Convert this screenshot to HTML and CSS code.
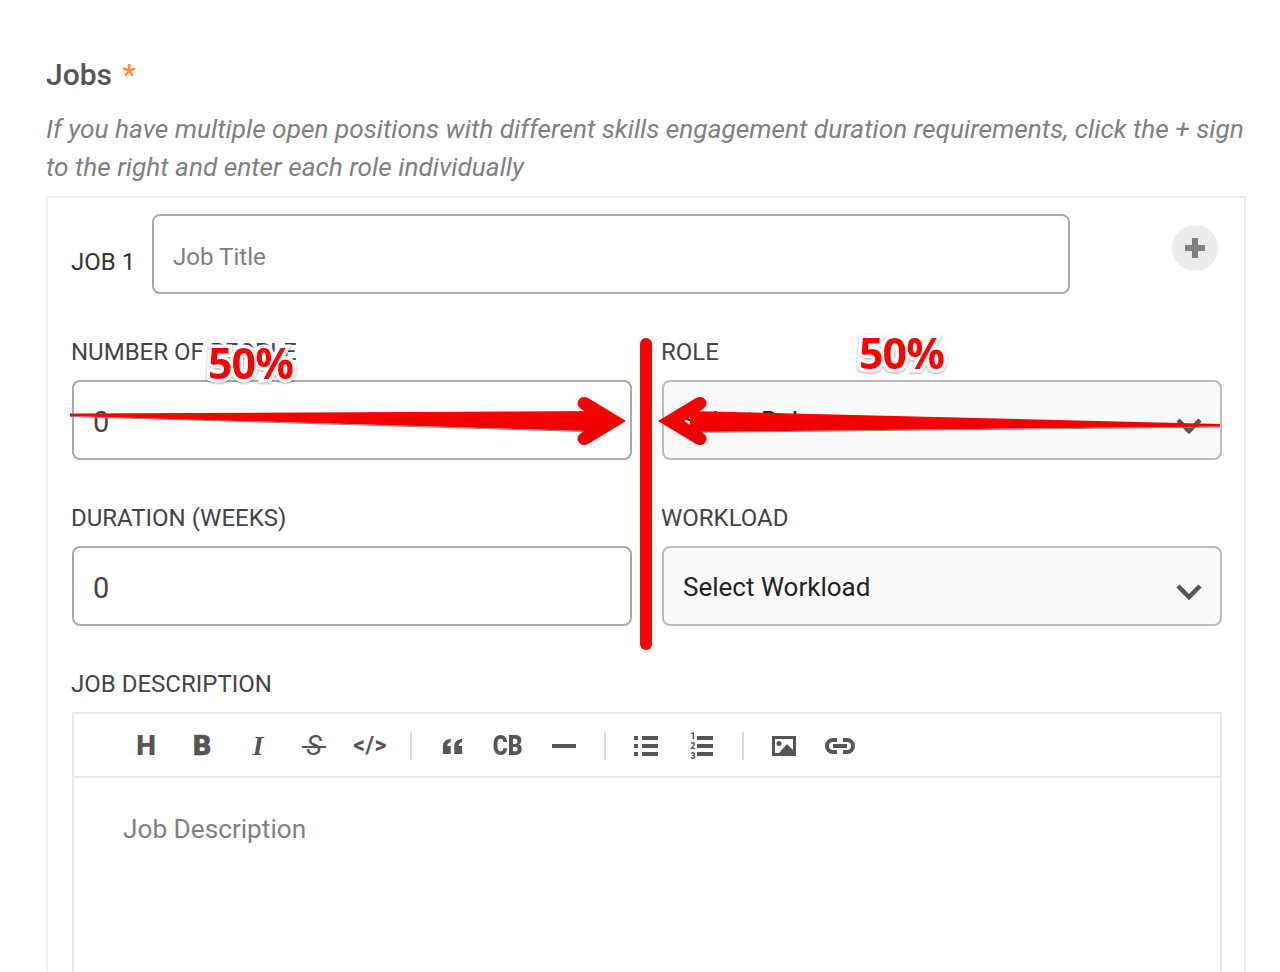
FILE: index.html
```html
<!DOCTYPE html>
<html lang="en">
<head>
  <meta charset="UTF-8" />
  <title>Jobs</title>
  <link rel="stylesheet" href="styles.css">
</head>
<body>
  <div class="page">
    <div class="section-title">Jobs <span class="required">*</span></div>
    <div class="section-hint">If you have multiple open positions with different skills engagement duration requirements, click the + sign to the right and enter each role individually</div>

    <div class="job-panel">
      <div class="job-head">
        <div class="job-name">JOB 1</div>
        <div class="field-box title-box"><span class="placeholder">Job Title</span></div>
        <button class="add-btn" aria-label="Add job">
          <svg width="22" height="22" viewBox="0 0 22 22"><path d="M8 1h6v7h7v6h-7v7H8v-7H1V8h7z" fill="#808080"/></svg>
        </button>
      </div>

      <div class="job-grid">
        <div class="field">
          <div class="field-label">NUMBER OF PEOPLE</div>
          <div class="field-box"><span class="value">0</span></div>
        </div>
        <div class="field">
          <div class="field-label">ROLE</div>
          <div class="field-box select-box">
            <span class="value-select">Select Role</span>
            <svg class="chevron" width="28" height="18" viewBox="0 0 28 18"><path d="M3 3l11 11L25 3" fill="none" stroke="#555" stroke-width="4.500"/></svg>
          </div>
        </div>
        <div class="field">
          <div class="field-label">DURATION (WEEKS)</div>
          <div class="field-box"><span class="value">0</span></div>
        </div>
        <div class="field">
          <div class="field-label">WORKLOAD</div>
          <div class="field-box select-box">
            <span class="value-select">Select Workload</span>
            <svg class="chevron" width="28" height="18" viewBox="0 0 28 18"><path d="M3 3l11 11L25 3" fill="none" stroke="#555" stroke-width="4.500"/></svg>
          </div>
        </div>
      </div>

      <div class="field-label">JOB DESCRIPTION</div>
      <div class="editor">
        <div class="toolbar">
          <span class="tool tool-h">H</span>
          <span class="tool tool-b">B</span>
          <span class="tool tool-i">I</span>
          <span class="tool tool-s">S</span>
          <span class="tool tool-code">&lt;/&gt;</span>
          <i class="sep"></i>
          <span class="tool">
            <svg width="21" height="16" viewBox="0 0 24 20" preserveAspectRatio="none"><path d="M1 20V11C1 5 4 2 10 1v4C7 6 6 8 6 10h4v10zM14 20V11c0-6 3-9 9-10v4c-3 1-4 3-4 5h4v10z" fill="#555"/></svg>
          </span>
          <span class="tool tool-cb"><span class="cb-text">CB</span></span>
          <span class="tool">
            <svg width="24" height="4" viewBox="0 0 24 4"><rect width="24" height="4" fill="#555"/></svg>
          </span>
          <i class="sep"></i>
          <span class="tool">
            <svg width="24" height="20" viewBox="0 0 24 20"><path d="M0 0h4v4H0zM8 0h16v4H8zM0 8h4v4H0zM8 8h16v4H8zM0 16h4v4H0zM8 16h16v4H8z" fill="#555"/></svg>
          </span>
          <span class="tool tool-ol">
            <span class="ol-nums"><span>1</span><span>2</span><span>3</span></span>
            <svg width="16" height="20" viewBox="0 0 16 20"><path d="M0 0h16v4H0zM0 8h16v4H0zM0 16h16v4H0z" fill="#555"/></svg>
          </span>
          <i class="sep"></i>
          <span class="tool">
            <svg width="24" height="20" viewBox="0 0 24 20"><path fill-rule="evenodd" d="M0 0h24v20H0zM3 3v14h4l8-9 6 6V3zM7 5a2.500 2.500 0 100 5 2.500 2.500 0 000-5z" fill="#555"/></svg>
          </span>
          <span class="tool">
            <svg width="32" height="18" viewBox="0 0 32 18"><path d="M13 3H9a6 6 0 000 12h4M19 3h4a6 6 0 010 12h-4M9 9h14" fill="none" stroke="#555" stroke-width="4"/></svg>
          </span>
        </div>
        <div class="editor-body">Job Description</div>
      </div>
    </div>
  </div>

  <!-- annotation drawn on top of the form -->
  <svg class="markup" width="1280" height="972" viewBox="0 0 1280 972">
    <defs>
      <linearGradient id="redFade" x1="0" y1="0" x2="0" y2="1">
        <stop offset="0" stop-color="#ff0000"/>
        <stop offset="1" stop-color="#e80000"/>
      </linearGradient>
    </defs>
    <line x1="646" y1="344" x2="646" y2="644" stroke="#f00" stroke-width="12" stroke-linecap="round"/>
    <path d="M70 416.500L600 432M690 432.500L1220 427" stroke="#888" stroke-width="1" fill="none"/>
    <path d="M70 413.500L605 411V431.500L70 416z" fill="url(#redFade)"/>
    <path d="M626 421L588 398Q581 395 578 401Q576 405 581 409L600 421L581 433Q576 437 578 441Q581 447 588 444z" fill="url(#redFade)"/>
    <path d="M1220 424L690 411V432L1220 426.500z" fill="url(#redFade)"/>
    <path d="M658 421L696 398Q703 395 706 401Q708 405 703 409L684 421L703 433Q708 437 706 441Q703 447 696 444z" fill="url(#redFade)"/>
  </svg>
  <div class="pct pct-left">50%</div>
  <div class="pct pct-right">50%</div>
</body>
</html>
```
FILE: styles.css
```css
html, body {
  margin: 0;
  padding: 0;
  height: 972px;
  overflow: hidden;
  background: #fff;
}

body {
  font-family: Roboto, "Liberation Sans", sans-serif;
  color: #444;
  position: relative;
}

.page {
  padding: 57px 34px 0 46px;
}

.section-title {
  font-size: 30px;
  line-height: 36px;
  font-weight: 500;
  color: #555;
}

.required {
  color: #ff8a2b;
  margin-left: 3px;
}

.section-hint {
  margin-top: 17px;
  font-size: 26.230px;
  line-height: 38px;
  font-style: italic;
  color: #808080;
}

.job-panel {
  border: 2px solid #eee;
  margin-top: 10px;
  padding: 16px 22px 0 23px;
  height: 900px;
}

.job-head {
  display: flex;
  align-items: flex-start;
  margin-bottom: 43px;
}

.job-name {
  width: 81px;
  margin-top: 33px;
  font-size: 24px;
  line-height: 30px;
  color: #333;
}

.field-box {
  box-sizing: border-box;
  height: 80px;
  border: 2px solid #aaa;
  border-radius: 8px;
  display: flex;
  align-items: center;
  padding: 0 19px;
  background: #fff;
}

.title-box {
  width: 918px;
}

.placeholder {
  margin-top: 6px;
  font-size: 24.100px;
  color: #808080;
}

.add-btn {
  width: 46px;
  height: 46px;
  margin: 11px 0 0 102px;
  padding: 0;
  border: 0;
  border-radius: 50%;
  background: #ebebeb;
  display: flex;
  align-items: center;
  justify-content: center;
}

.job-grid {
  display: grid;
  grid-template-columns: 561px 561px;
  column-gap: 29px;
  row-gap: 43px;
  margin-bottom: 43px;
}

.field .field-box {
  margin-left: 1px;
}

.field-label {
  font-size: 24px;
  line-height: 30px;
  margin-bottom: 13px;
  color: #444;
}

.value {
  margin-top: 4px;
  font-size: 29px;
  color: #444;
}

.select-box {
  background: #fafafa;
  border-color: #bbb;
  justify-content: space-between;
  padding-right: 17px;
}

.value-select {
  margin-top: 2px;
  font-size: 26px;
  color: #222;
}

.chevron {
  margin-top: 12px;
}

.editor {
  box-sizing: border-box;
  width: 1150px;
  margin-left: 1px;
  height: 800px;
  border: 2px solid #e6e6e6;
}

.toolbar {
  height: 60px;
  padding-top: 2px;
  border-bottom: 2px solid #e6e6e6;
  padding-left: 44px;
  display: flex;
  align-items: center;
  color: #555;
}

.tool {
  position: relative;
  width: 56px;
  height: 28px;
  display: flex;
  align-items: center;
  justify-content: center;
  flex: none;
  color: #555;
  font-size: 28px;
  line-height: 28px;
}

.sep {
  width: 2px;
  height: 28px;
  margin: 0 12px;
  background: #d9d9d9;
  flex: none;
}

.tool-h,
.tool-b {
  font-weight: 900;
}

.tool-b {
  -webkit-text-stroke: 0.6px #555;
}

.tool-i {
  font-family: "Liberation Serif", serif;
  font-style: italic;
  font-weight: 700;
}

.tool-s {
  font-style: italic;
  font-size: 27px;
}

.tool-s::after {
  content: "";
  position: absolute;
  left: 16px;
  top: 14px;
  width: 24px;
  height: 2px;
  background: #555;
}

.tool-code {
  font-size: 23px;
  font-weight: 700;
  letter-spacing: 0.5px;
}

.cb-text {
  display: block;
  font-size: 27px;
  font-weight: 900;
  transform: scaleX(0.85);
}

.tool-ol {
  gap: 2px;
}

.ol-nums {
  display: flex;
  flex-direction: column;
  font-size: 8.500px;
  line-height: 10px;
  font-weight: 900;
}

.editor-body {
  padding: 35px 49px;
  font-size: 26.200px;
  line-height: 32px;
  color: #808080;
}

.markup {
  position: absolute;
  left: 0;
  top: 0;
}

.pct {
  position: absolute;
  font-family: "Open Sans", "Noto Sans", sans-serif;
  font-size: 43px;
  line-height: 50px;
  font-weight: 700;
  letter-spacing: -1px;
  color: #f00;
  -webkit-text-stroke: 7px #fff;
  paint-order: stroke fill;
  filter: drop-shadow(0 1px 1px rgba(0, 0, 0, 0.35));
}

.pct-left {
  left: 208px;
  top: 338px;
}

.pct-right {
  left: 859px;
  top: 328px;
}
```
